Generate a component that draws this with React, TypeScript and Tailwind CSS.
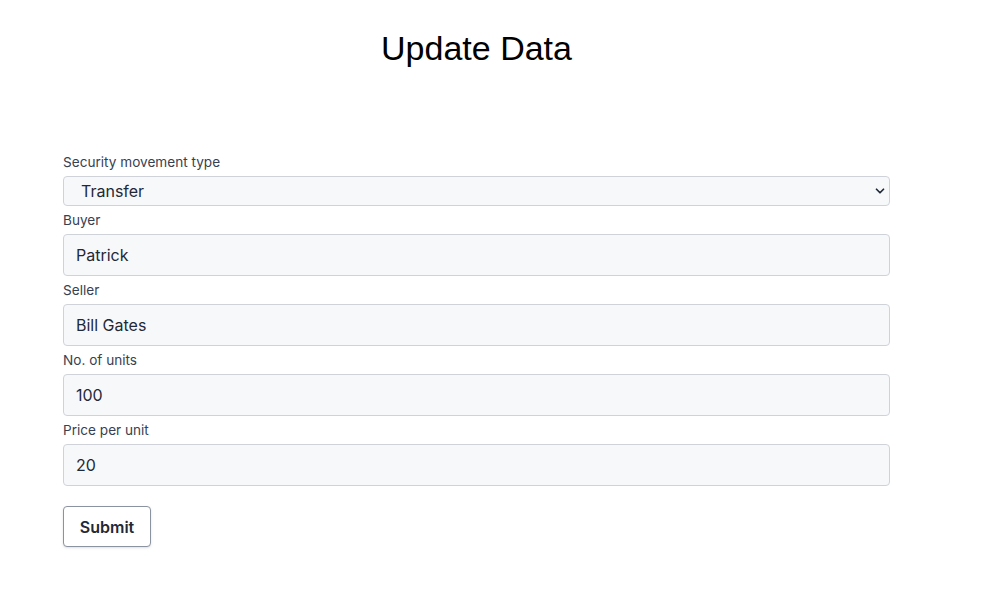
import { ChevronDown } from "lucide-react";

const fields = [
  { label: "Buyer", value: "Patrick" },
  { label: "Seller", value: "Bill Gates" },
  { label: "No. of units", value: "100" },
  { label: "Price per unit", value: "20" },
];

export default function App() {
  return (
    <div className="min-h-screen bg-white font-['Inter','Noto_Sans',sans-serif] text-[#1f2937]">
      <div className="ml-[63px] w-[827px] pt-[28px]">
        <h1 className="text-center font-['Liberation_Sans',Arial,sans-serif] text-[34px] leading-[40px] text-black">
          Update Data
        </h1>

        <form className="mt-[80px] flex flex-col" onSubmit={(e) => e.preventDefault()}>
          <label className="my-1 text-[13.6px] leading-5 text-[#374151]">Security movement type</label>
          <div className="relative">
            <select
              defaultValue="Transfer"
              className="h-[30px] w-full appearance-none rounded-[4px] border border-[#cfd3d9] bg-[#f7f8fa] pl-[17px] text-base text-[#1f2937] outline-none"
            >
              <option>Transfer</option>
              <option>Issue</option>
              <option>Redemption</option>
            </select>
            <ChevronDown
              className="pointer-events-none absolute right-[3px] top-1/2 h-[14px] w-[14px] -translate-y-1/2 text-[#1f2937]"
              strokeWidth={3}
            />
          </div>

          {fields.map((f) => (
            <div key={f.label} className="flex flex-col">
              <label className="my-1 text-[13.6px] leading-5 text-[#374151]">{f.label}</label>
              <input
                defaultValue={f.value}
                className="h-[42px] w-full rounded-[4px] border border-[#cfd3d9] bg-[#f7f8fa] px-3 text-base text-[#1f2937] outline-none"
              />
            </div>
          ))}

          <div className="mt-5">
            <button
              type="submit"
              className="h-[41px] w-[88px] rounded-[4px] border border-[#8b93a1] bg-white text-base font-semibold text-[#1f2937] shadow-sm"
            >
              Submit
            </button>
          </div>
        </form>
      </div>
    </div>
  );
}
